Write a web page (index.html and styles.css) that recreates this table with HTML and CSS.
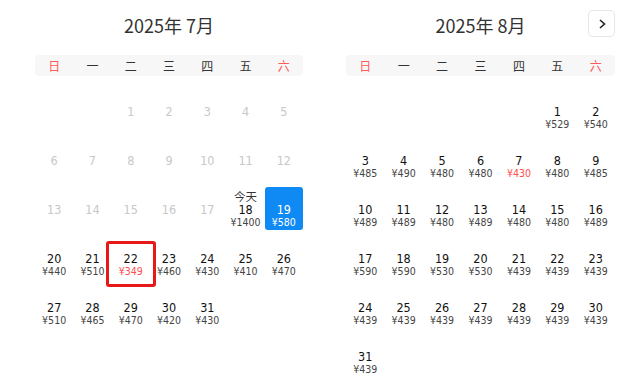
FILE: index.html
```html
<!DOCTYPE html>
<html lang="zh">
<head>
<meta charset="utf-8">
<link rel="stylesheet" href="styles.css">
</head>
<body>
<div class="calendar">
  <section class="month">
    <header class="month-head"><h2 class="month-title">2025年 7月</h2></header>
    <div class="weekdays"><span class="wk we">日</span><span class="wk">一</span><span class="wk">二</span><span class="wk">三</span><span class="wk">四</span><span class="wk">五</span><span class="wk we">六</span></div>
    <div class="days">
      <div class="day empty"></div>
      <div class="day empty"></div>
      <div class="day off"><span class="lbl"></span><span class="num">1</span></div>
      <div class="day off"><span class="lbl"></span><span class="num">2</span></div>
      <div class="day off"><span class="lbl"></span><span class="num">3</span></div>
      <div class="day off"><span class="lbl"></span><span class="num">4</span></div>
      <div class="day off"><span class="lbl"></span><span class="num">5</span></div>
      <div class="day off"><span class="lbl"></span><span class="num">6</span></div>
      <div class="day off"><span class="lbl"></span><span class="num">7</span></div>
      <div class="day off"><span class="lbl"></span><span class="num">8</span></div>
      <div class="day off"><span class="lbl"></span><span class="num">9</span></div>
      <div class="day off"><span class="lbl"></span><span class="num">10</span></div>
      <div class="day off"><span class="lbl"></span><span class="num">11</span></div>
      <div class="day off"><span class="lbl"></span><span class="num">12</span></div>
      <div class="day off"><span class="lbl"></span><span class="num">13</span></div>
      <div class="day off"><span class="lbl"></span><span class="num">14</span></div>
      <div class="day off"><span class="lbl"></span><span class="num">15</span></div>
      <div class="day off"><span class="lbl"></span><span class="num">16</span></div>
      <div class="day off"><span class="lbl"></span><span class="num">17</span></div>
      <div class="day"><span class="lbl">今天</span><span class="num">18</span><span class="price">¥1400</span></div>
      <div class="day selected"><span class="lbl"></span><span class="num">19</span><span class="price">¥580</span></div>
      <div class="day"><span class="lbl"></span><span class="num">20</span><span class="price">¥440</span></div>
      <div class="day"><span class="lbl"></span><span class="num">21</span><span class="price">¥510</span></div>
      <div class="day marked"><span class="lbl"></span><span class="num">22</span><span class="price low">¥349</span><span class="mark"></span></div>
      <div class="day"><span class="lbl"></span><span class="num">23</span><span class="price">¥460</span></div>
      <div class="day"><span class="lbl"></span><span class="num">24</span><span class="price">¥430</span></div>
      <div class="day"><span class="lbl"></span><span class="num">25</span><span class="price">¥410</span></div>
      <div class="day"><span class="lbl"></span><span class="num">26</span><span class="price">¥470</span></div>
      <div class="day"><span class="lbl"></span><span class="num">27</span><span class="price">¥510</span></div>
      <div class="day"><span class="lbl"></span><span class="num">28</span><span class="price">¥465</span></div>
      <div class="day"><span class="lbl"></span><span class="num">29</span><span class="price">¥470</span></div>
      <div class="day"><span class="lbl"></span><span class="num">30</span><span class="price">¥420</span></div>
      <div class="day"><span class="lbl"></span><span class="num">31</span><span class="price">¥430</span></div>
    </div>
  </section>
  <section class="month month-right">
    <header class="month-head"><h2 class="month-title">2025年 8月</h2>
      <button class="next" aria-label="下个月"><svg width="10" height="12" viewBox="0 0 10 12"><path d="M3 2 L7.5 6 L3 10" fill="none" stroke="#222" stroke-width="1.6"/></svg></button>
    </header>
    <div class="weekdays"><span class="wk we">日</span><span class="wk">一</span><span class="wk">二</span><span class="wk">三</span><span class="wk">四</span><span class="wk">五</span><span class="wk we">六</span></div>
    <div class="days">
      <div class="day empty"></div>
      <div class="day empty"></div>
      <div class="day empty"></div>
      <div class="day empty"></div>
      <div class="day empty"></div>
      <div class="day"><span class="lbl"></span><span class="num">1</span><span class="price">¥529</span></div>
      <div class="day"><span class="lbl"></span><span class="num">2</span><span class="price">¥540</span></div>
      <div class="day"><span class="lbl"></span><span class="num">3</span><span class="price">¥485</span></div>
      <div class="day"><span class="lbl"></span><span class="num">4</span><span class="price">¥490</span></div>
      <div class="day"><span class="lbl"></span><span class="num">5</span><span class="price">¥480</span></div>
      <div class="day"><span class="lbl"></span><span class="num">6</span><span class="price">¥480</span></div>
      <div class="day"><span class="lbl"></span><span class="num">7</span><span class="price low">¥430</span></div>
      <div class="day"><span class="lbl"></span><span class="num">8</span><span class="price">¥480</span></div>
      <div class="day"><span class="lbl"></span><span class="num">9</span><span class="price">¥485</span></div>
      <div class="day"><span class="lbl"></span><span class="num">10</span><span class="price">¥489</span></div>
      <div class="day"><span class="lbl"></span><span class="num">11</span><span class="price">¥489</span></div>
      <div class="day"><span class="lbl"></span><span class="num">12</span><span class="price">¥480</span></div>
      <div class="day"><span class="lbl"></span><span class="num">13</span><span class="price">¥489</span></div>
      <div class="day"><span class="lbl"></span><span class="num">14</span><span class="price">¥480</span></div>
      <div class="day"><span class="lbl"></span><span class="num">15</span><span class="price">¥480</span></div>
      <div class="day"><span class="lbl"></span><span class="num">16</span><span class="price">¥489</span></div>
      <div class="day"><span class="lbl"></span><span class="num">17</span><span class="price">¥590</span></div>
      <div class="day"><span class="lbl"></span><span class="num">18</span><span class="price">¥590</span></div>
      <div class="day"><span class="lbl"></span><span class="num">19</span><span class="price">¥530</span></div>
      <div class="day"><span class="lbl"></span><span class="num">20</span><span class="price">¥530</span></div>
      <div class="day"><span class="lbl"></span><span class="num">21</span><span class="price">¥439</span></div>
      <div class="day"><span class="lbl"></span><span class="num">22</span><span class="price">¥439</span></div>
      <div class="day"><span class="lbl"></span><span class="num">23</span><span class="price">¥439</span></div>
      <div class="day"><span class="lbl"></span><span class="num">24</span><span class="price">¥439</span></div>
      <div class="day"><span class="lbl"></span><span class="num">25</span><span class="price">¥439</span></div>
      <div class="day"><span class="lbl"></span><span class="num">26</span><span class="price">¥439</span></div>
      <div class="day"><span class="lbl"></span><span class="num">27</span><span class="price">¥439</span></div>
      <div class="day"><span class="lbl"></span><span class="num">28</span><span class="price">¥439</span></div>
      <div class="day"><span class="lbl"></span><span class="num">29</span><span class="price">¥439</span></div>
      <div class="day"><span class="lbl"></span><span class="num">30</span><span class="price">¥439</span></div>
      <div class="day"><span class="lbl"></span><span class="num">31</span><span class="price">¥439</span></div>
    </div>
  </section>
</div>
</body>
</html>
```
FILE: styles.css
```css
* { box-sizing: border-box; }
html, body { margin: 0; padding: 0; background: #fff; }
body {
  width: 640px;
  height: 388px;
  overflow: hidden;
  font-family: Tahoma, "DejaVu Sans Condensed", "Liberation Sans", "Noto Sans CJK SC", sans-serif;
  color: #111;
}
.calendar {
  display: grid;
  grid-template-columns: 268px 269px;
  column-gap: 43px;
  padding-left: 35px;
}
.month-head {
  position: relative;
  height: 49px;
  display: flex;
  align-items: center;
  justify-content: center;
}
.month-title {
  margin: 0;
  font-family: "Noto Sans CJK SC", sans-serif;
  font-weight: 400;
  font-size: 18px;
  line-height: 24px;
  color: #333;
}
.next {
  position: absolute;
  right: 0;
  top: 10px;
  width: 27px;
  height: 27px;
  padding: 0;
  border: 1px solid #e6e6e6;
  border-radius: 5px;
  background: #fff;
  display: flex;
  align-items: center;
  justify-content: center;
}
.weekdays {
  margin-top: 6px;
  height: 21px;
  background: #f7f7f7;
  border-radius: 4px;
  display: grid;
  grid-template-columns: repeat(7, 1fr);
  align-items: center;
}
.wk {
  text-align: center;
  font-family: "Noto Sans CJK SC", sans-serif;
  font-size: 12px;
  line-height: 21px;
  color: #333;
}
.wk.we { color: #ff5a5a; }
.days {
  margin-top: 13px;
  display: grid;
  grid-template-columns: repeat(7, 1fr);
  grid-auto-rows: 43px;
  row-gap: 6px;
}
.day {
  position: relative;
  display: flex;
  flex-direction: column;
  align-items: center;
  padding-top: 3px;
  border-radius: 3px;
}
.lbl {
  height: 13px;
  font-family: "Noto Sans CJK SC", sans-serif;
  font-size: 11.5px;
  line-height: 12px;
  color: #333;
}
.num {
  font-size: 12.5px;
  line-height: 13px;
  color: #111;
}
.price {
  font-size: 10.5px;
  line-height: 12px;
  color: #444;
}
.price.low { color: #ff4d4d; }
.day.off .num { color: #c8c8c8; }
.day.selected { background: #0f89f3; }
.day.selected .num,
.day.selected .price { color: #fff; }
.mark {
  position: absolute;
  left: -6px;
  right: -6px;
  top: 5px;
  bottom: -8px;
  border: 3px solid #e81818;
  border-radius: 3px;
}
```
